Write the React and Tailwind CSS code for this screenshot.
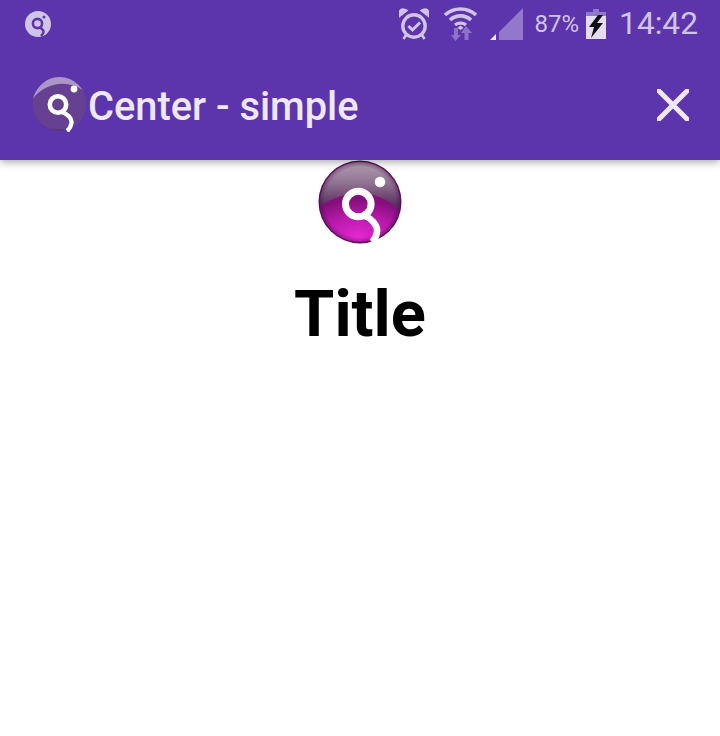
const GlossyLogo = () => (
  <svg width="84" height="84" viewBox="0 0 84 84">
    <defs>
      <linearGradient id="topShine" x1="0" y1="0" x2="0" y2="1">
        <stop offset="0" stopColor="#b8a4b6" />
        <stop offset="0.28" stopColor="#8f7190" />
        <stop offset="0.52" stopColor="#5f3362" />
        <stop offset="1" stopColor="#4a1f50" />
      </linearGradient>
      <radialGradient id="bottomGlow" cx="0.48" cy="0.86" r="0.72">
        <stop offset="0" stopColor="#e428d0" />
        <stop offset="0.6" stopColor="#b818aa" />
        <stop offset="1" stopColor="#84107c" />
      </radialGradient>
      <radialGradient id="rimShade" cx="0.5" cy="0.5" r="0.5">
        <stop offset="0.84" stopColor="#3a0a40" stopOpacity="0" />
        <stop offset="1" stopColor="#3a0a40" stopOpacity="0.5" />
      </radialGradient>
      <clipPath id="ball">
        <circle cx="42" cy="42" r="40" />
      </clipPath>
    </defs>
    <circle cx="42" cy="42" r="41.5" fill="#5e0a5c" />
    <g clipPath="url(#ball)">
      <rect x="0" y="0" width="84" height="84" fill="url(#topShine)" />
      <path d="M0 48 C14 37 30 33 44 33 C60 34 74 42 84 52 L84 84 L0 84 Z" fill="url(#bottomGlow)" />
      <rect x="0" y="0" width="84" height="84" fill="url(#rimShade)" />
    </g>
    <circle cx="40.3" cy="44" r="12.8" fill="none" stroke="#fff" strokeWidth="7" />
    <path d="M45 55 C53 58 60 65 59 72 C58.5 76 57 79 54 82" fill="none" stroke="#fff" strokeWidth="6.5" />
    <circle cx="62" cy="22" r="5.3" fill="#fff" />
  </svg>
);

const ToolbarLogo = () => (
  <svg width="56" height="56" viewBox="0 0 56 56">
    <defs>
      <clipPath id="tbBall">
        <circle cx="27.5" cy="28" r="27" />
      </clipPath>
    </defs>
    <circle cx="27.5" cy="28" r="27" fill="#664191" />
    <g clipPath="url(#tbBall)">
      <path d="M0 24 C5 8 18 0 28 0 C38 0 48 7 54 17 C42 4 14 3 0 24 Z" fill="#ab96c8" />
      <path d="M6 50 C20 54 36 54 50 49 L50 56 L6 56 Z" fill="#5a3685" />
    </g>
    <circle cx="26" cy="28.5" r="8.2" fill="none" stroke="#fff" strokeWidth="4.6" />
    <path d="M30 36 C35 38 40 42 39.5 47 C39 50 37.5 53 35 55" fill="none" stroke="#fff" strokeWidth="4.4" />
    <circle cx="42" cy="13" r="3.4" fill="#fff" />
  </svg>
);

const StatusLogo = () => (
  <svg width="26" height="26" viewBox="0 0 26 26">
    <circle cx="13" cy="13" r="13" fill="#d1c4e9" />
    <circle cx="12.5" cy="12.5" r="4.6" fill="none" stroke="#5c34ac" strokeWidth="2.6" />
    <path d="M15 16.5 C17 18 19 19 18.5 21 C18.2 23 17 24 16 25" fill="none" stroke="#5c34ac" strokeWidth="2.4" />
    <circle cx="19" cy="6" r="1.5" fill="#5c34ac" />
  </svg>
);

const AlarmIcon = () => (
  <svg width="30" height="32" viewBox="0 0 30 32" fill="none">
    <circle cx="15" cy="18" r="11.2" stroke="#d1c4e9" strokeWidth="3.4" />
    <path d="M9.5 18 L13.5 22 L21 14.5" stroke="#d1c4e9" strokeWidth="3" />
    <path d="M0.5 8.5 L8 2.5 Q3 -0.5 0.5 3 Z M29.5 8.5 L22 2.5 Q27 -0.5 29.5 3 Z" fill="#d1c4e9" stroke="#d1c4e9" strokeWidth="1.5" />
    <path d="M7 27 L4.5 31 M23 27 L25.5 31" stroke="#d1c4e9" strokeWidth="2.6" />
  </svg>
);

const WifiIcon = () => (
  <svg width="33" height="34" viewBox="0 0 33 34" fill="none">
    <path d="M1 8 C10 0 23 0 32 8" stroke="#d1c4e9" strokeWidth="3.6" />
    <path d="M6 13 C12 7.5 21 7.5 27 13" stroke="#d1c4e9" strokeWidth="3.6" />
    <path d="M11 18 C14 15.5 19 15.5 22 18" stroke="#d1c4e9" strokeWidth="3.4" />
    <path d="M13.5 21 L16.5 18.5 L19.5 21 L16.5 23 Z" fill="#d1c4e9" />
    <path d="M10 21 H14 V28 H17 L11.5 34 L7 28 H10 Z" fill="#8e72c6" />
    <path d="M22 19 L28 26 H24.5 V33 H20.5 V26 H17 Z" fill="#8e72c6" />
  </svg>
);

const SignalIcon = () => (
  <svg width="33" height="32" viewBox="0 0 33 32">
    <path d="M33 0 V32 H9 V24 Z" fill="#9277cb" />
    <path d="M6 26 V32 H0 Z" fill="#ede7f6" />
  </svg>
);

const BatteryIcon = () => (
  <svg width="20" height="30" viewBox="0 0 20 30">
    <path d="M7 0 H13 V3 H20 V8 H0 V3 H7 Z" fill="#9277cb" />
    <rect x="0" y="7" width="20" height="23" fill="#e4dcf2" />
    <path d="M12 6 L3 18 H8 L5 29 L17 14 H11 L17 6 Z" fill="#111" />
  </svg>
);

const CloseIcon = () => (
  <svg width="32" height="32" viewBox="0 0 32 32">
    <path d="M2 2 L30 30 M30 2 L2 30" stroke="#ede7f6" strokeWidth="5" strokeLinecap="square" />
  </svg>
);

export default function App() {
  return (
    <div className="min-h-[736px] bg-white font-['Roboto',sans-serif]">
      <header className="bg-[#5c34ac] shadow-[0_2px_8px_rgba(0,0,0,0.35)] relative">
        {/* status bar */}
        <div className="flex h-12 items-center pl-[25px] pr-[22px] text-[#d1c4e9]">
          <StatusLogo />
          <div className="ml-auto flex items-center">
            <AlarmIcon />
            <div className="ml-[15px]"><WifiIcon /></div>
            <div className="ml-[13px]"><SignalIcon /></div>
            <span className="ml-[12px] text-[24px] leading-none">87%</span>
            <div className="ml-[7px]"><BatteryIcon /></div>
            <span className="ml-[13px] text-[31.7px] leading-none font-normal">14:42</span>
          </div>
        </div>
        {/* toolbar */}
        <div className="flex h-28 items-center pl-[32px] pr-[31px]">
          <ToolbarLogo />
          <h1 className="mt-[6px] text-[39.8px] leading-none font-medium text-[#ede7f6]">Center - simple</h1>
          <button className="ml-auto mt-[1px]"><CloseIcon /></button>
        </div>
      </header>

      <main className="flex flex-col items-center">
        <GlossyLogo />
        <h2 className="mt-[38px] text-[65px] leading-none font-bold text-black">Title</h2>
      </main>
    </div>
  );
}
